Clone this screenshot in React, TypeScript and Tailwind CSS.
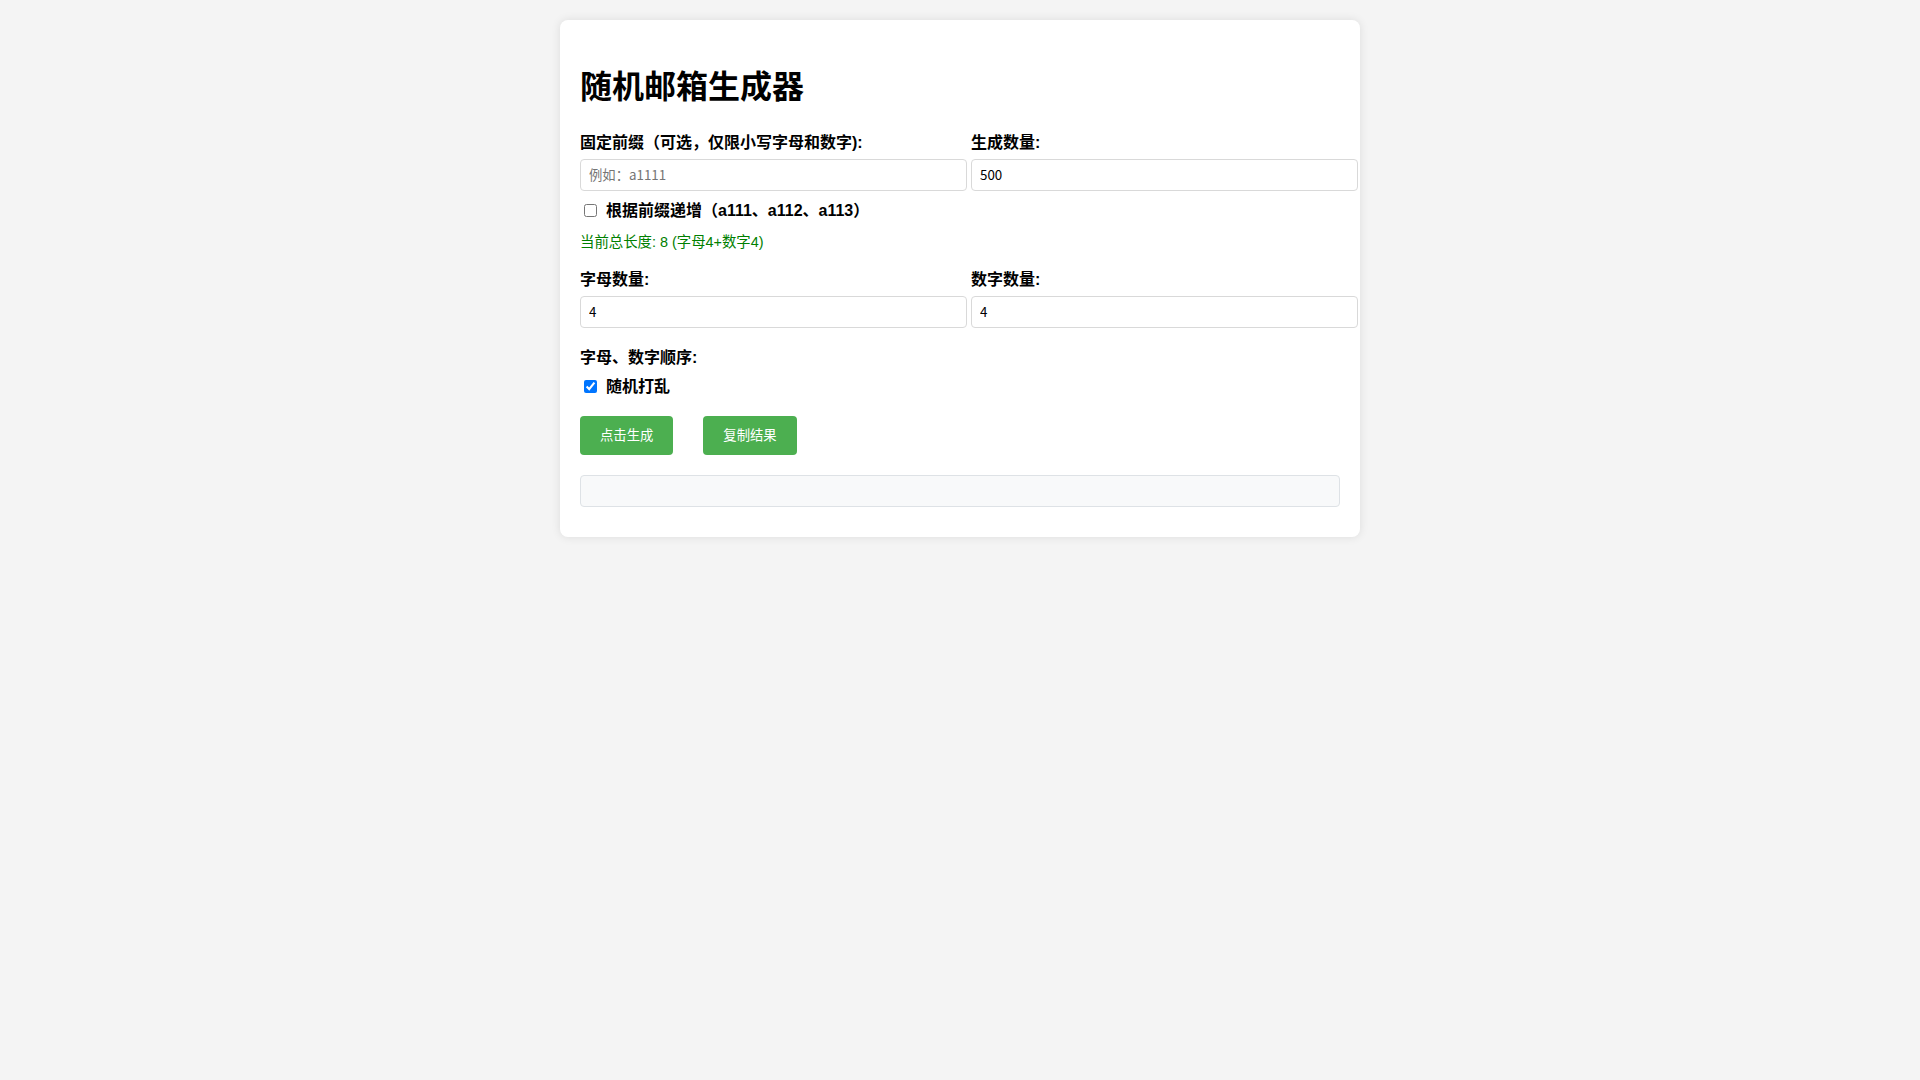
import { useState } from "react"

const font = "font-['Liberation_Sans','Noto_Sans_CJK_SC',sans-serif]"

export default function App() {
  const [prefix, setPrefix] = useState("")
  const [count, setCount] = useState("500")
  const [letters, setLetters] = useState("4")
  const [digits, setDigits] = useState("4")
  const [increment, setIncrement] = useState(false)
  const [shuffle, setShuffle] = useState(true)

  const total = (parseInt(letters) || 0) + (parseInt(digits) || 0)

  const inputCls =
    "block w-[387px] h-[32px] px-[8px] border border-[#d9d9d9] rounded-[4px] bg-white text-[13.33px] text-black outline-none placeholder:text-[#757575] font-['Noto_Sans_CJK_SC',sans-serif]"

  return (
    <div className={`min-h-screen bg-[#f4f4f4] pt-[20px] ${font}`}>
      <div className="mx-auto w-[800px] bg-white rounded-[8px] shadow-[0_0_10px_rgba(0,0,0,0.1)] px-[20px] pt-[20px] pb-[30px]">
        <h1 className="mt-[23.5px] mb-[21px] text-[32px] leading-[46px] font-bold text-black">随机邮箱生成器</h1>

        <div className="flex gap-[4px]">
          <div className="w-[387px]">
            <label className="block text-[16px] leading-[23px] font-bold text-black mb-[5px]">
              固定前缀（可选，仅限小写字母和数字):
            </label>
            <input
              className={inputCls}
              placeholder="例如：a1111"
              value={prefix}
              onChange={(e) => setPrefix(e.target.value)}
            />
          </div>
          <div className="w-[387px]">
            <label className="block text-[16px] leading-[23px] font-bold text-black mb-[5px]">生成数量:</label>
            <input className={inputCls} value={count} onChange={(e) => setCount(e.target.value)} />
          </div>
        </div>

        <label className="mt-[8px] flex items-center text-[16px] leading-[23px] font-bold text-black">
          <input
            type="checkbox"
            className="w-[13px] h-[13px] ml-[4px] mr-[9px]"
            checked={increment}
            onChange={(e) => setIncrement(e.target.checked)}
          />
          根据前缀递增（a111、a112、a113）
        </label>

        <div className="mt-[10px] text-[14.4px] leading-[20px] text-[#008000]">
          当前总长度: {total} (字母{letters}+数字{digits})
        </div>

        <div className="mt-[16px] flex gap-[4px]">
          <div className="w-[387px]">
            <label className="block text-[16px] leading-[23px] font-bold text-black mb-[5px]">字母数量:</label>
            <input className={inputCls} value={letters} onChange={(e) => setLetters(e.target.value)} />
          </div>
          <div className="w-[387px]">
            <label className="block text-[16px] leading-[23px] font-bold text-black mb-[5px]">数字数量:</label>
            <input className={inputCls} value={digits} onChange={(e) => setDigits(e.target.value)} />
          </div>
        </div>

        <div className="mt-[18px] text-[16px] leading-[23px] font-bold text-black">字母、数字顺序:</div>
        <label className="mt-[6px] flex items-center text-[16px] leading-[23px] font-bold text-black">
          <input
            type="checkbox"
            className="w-[13px] h-[13px] ml-[4px] mr-[9px]"
            checked={shuffle}
            onChange={(e) => setShuffle(e.target.checked)}
          />
          随机打乱
        </label>

        <div className="mt-[18px] flex gap-[30px]">
          <button className="h-[39px] px-[20px] rounded-[4px] bg-[#4caf50] text-white text-[13.33px] font-['Noto_Sans_CJK_SC',sans-serif]">
            点击生成
          </button>
          <button className="h-[39px] px-[20px] rounded-[4px] bg-[#4caf50] text-white text-[13.33px] font-['Noto_Sans_CJK_SC',sans-serif]">
            复制结果
          </button>
        </div>

        <div className="mt-[20px] h-[32px] rounded-[4px] border border-[#dee2e6] bg-[#f8f9fa]"></div>
      </div>
    </div>
  )
}
